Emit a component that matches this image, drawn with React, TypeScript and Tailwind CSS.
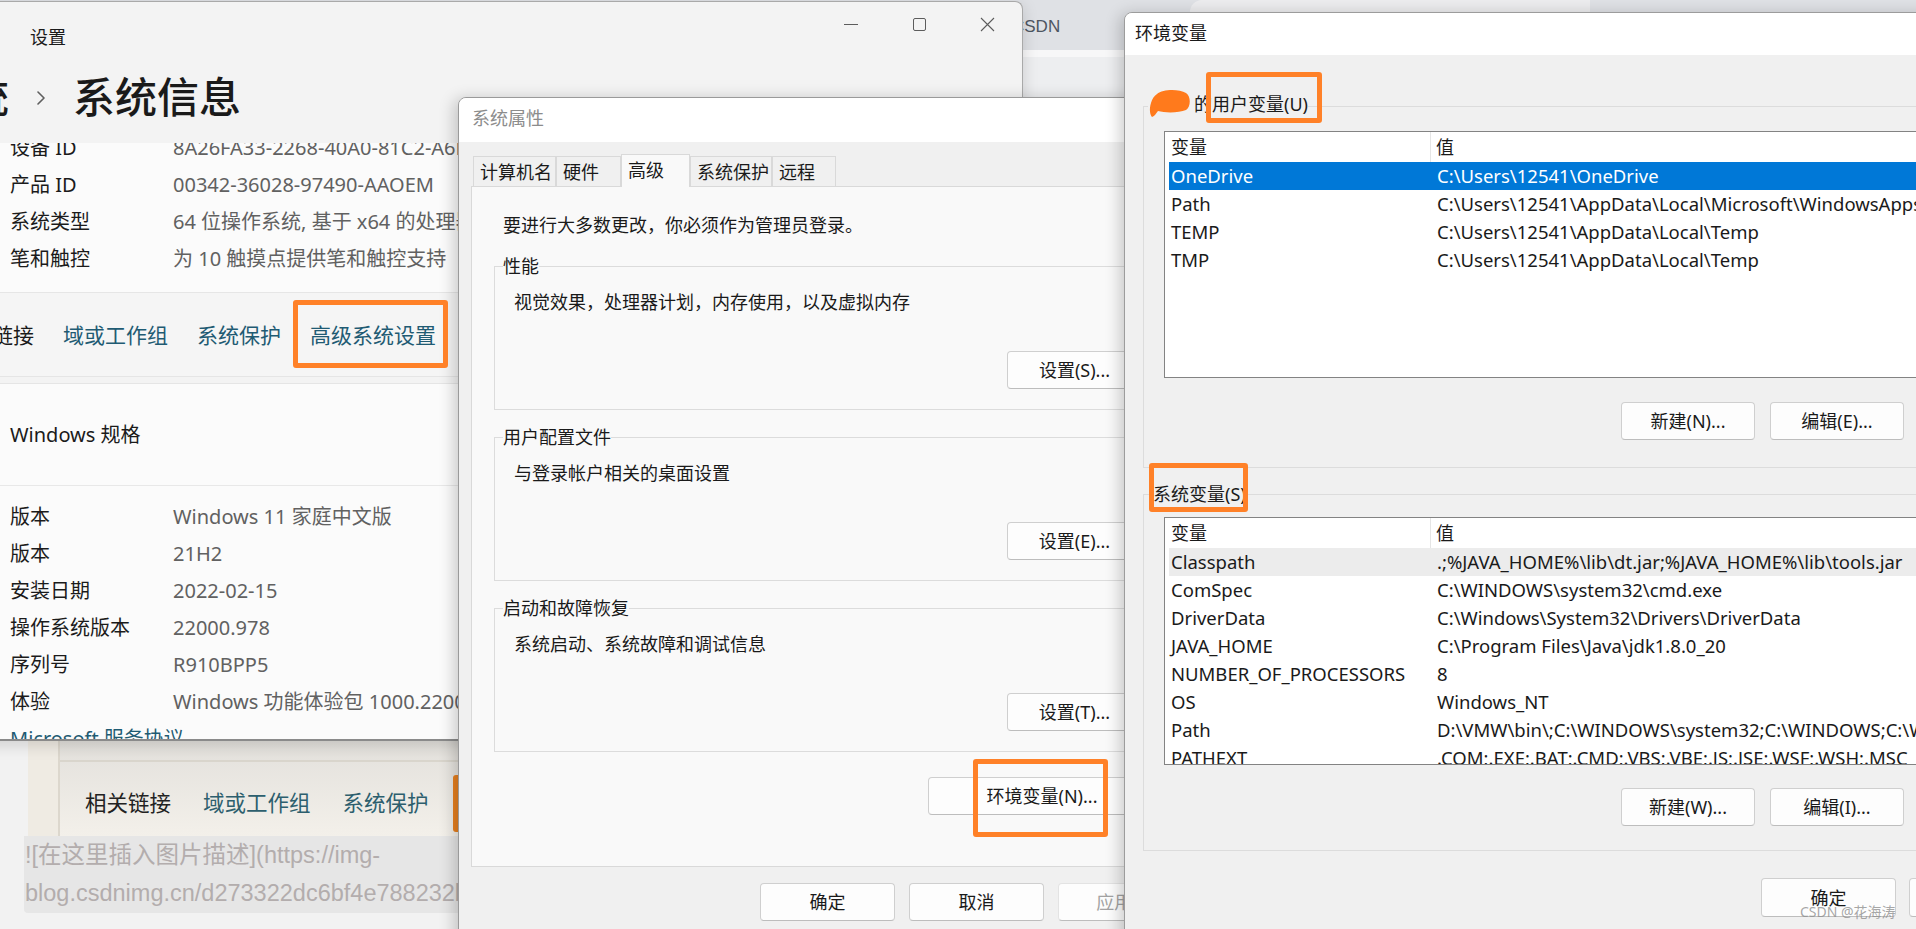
import React from "react";

const font = "font-['Noto_Sans','Noto_Sans_CJK_SC',sans-serif]";

const deviceRows = [
  ["设备 ID", "8A26FA33-2268-40A0-81C2-A6B8C3D2E1F0"],
  ["产品 ID", "00342-36028-97490-AAOEM"],
  ["系统类型", "64 位操作系统, 基于 x64 的处理器"],
  ["笔和触控", "为 10 触摸点提供笔和触控支持"],
];

const windowsRows = [
  ["版本", "Windows 11 家庭中文版"],
  ["版本", "21H2"],
  ["安装日期", "2022-02-15"],
  ["操作系统版本", "22000.978"],
  ["序列号", "R910BPP5"],
  ["体验", "Windows 功能体验包 1000.22000.978.0"],
];

const userVars = [
  ["OneDrive", "C:\\Users\\12541\\OneDrive"],
  ["Path", "C:\\Users\\12541\\AppData\\Local\\Microsoft\\WindowsApps;"],
  ["TEMP", "C:\\Users\\12541\\AppData\\Local\\Temp"],
  ["TMP", "C:\\Users\\12541\\AppData\\Local\\Temp"],
];

const sysVars = [
  ["Classpath", ".;%JAVA_HOME%\\lib\\dt.jar;%JAVA_HOME%\\lib\\tools.jar"],
  ["ComSpec", "C:\\WINDOWS\\system32\\cmd.exe"],
  ["DriverData", "C:\\Windows\\System32\\Drivers\\DriverData"],
  ["JAVA_HOME", "C:\\Program Files\\Java\\jdk1.8.0_20"],
  ["NUMBER_OF_PROCESSORS", "8"],
  ["OS", "Windows_NT"],
  ["Path", "D:\\VMW\\bin\\;C:\\WINDOWS\\system32;C:\\WINDOWS;C:\\WINDOWS\\System32\\Wbem"],
  ["PATHEXT", ".COM;.EXE;.BAT;.CMD;.VBS;.VBE;.JS;.JSE;.WSF;.WSH;.MSC"],
];

function BrowserBackdrop() {
  return (
    <div className="absolute inset-0 flex flex-col">
      <div className="flex h-[50px] items-start bg-[#dfe1e5]">
        <div className="ml-[1012px] mt-[15px] text-[17px] leading-[24px] text-[#4d5662] font-['Liberation_Sans',sans-serif]">
          CSDN
        </div>
        <div className="ml-[130px] h-[14px] w-[400px] rounded-tl-[12px] bg-[#ececee]" />
      </div>
      <div className="h-[7px] bg-[#f7f7f8]" />
      <div className="h-[40px] bg-[#edeef0]" />
      <div className="flex flex-1 flex-col bg-[#f2f2f2] pl-[24px] pt-[603px]">
        {/* pasted screenshot in the editor */}
        <div className="ml-[4px] flex h-[136px] w-[600px] bg-gradient-to-b from-[#dcdad6] to-[#f3f0ea]">
          <div className="w-[32px] border-r-2 border-[#dcd7cd] bg-[#efebe3]" />
          <div className="flex flex-1 flex-col">
            <div className="h-[62px] border-b-2 border-[#d9d5cc]" />
            <div className="flex flex-1 items-center gap-[32px] pl-[25px] pt-[8px] text-[21.5px] leading-[30px]">
              <span className="text-[#222]">相关链接</span>
              <span className="text-[#2d5f6e]">域或工作组</span>
              <span className="text-[#2d5f6e]">系统保护</span>
              <span className="ml-[-8px] h-[57px] w-[10px] rounded-[3px] bg-[#e8801f]" />
            </div>
          </div>
        </div>
        <div className="h-[77px] w-[600px] whitespace-nowrap rounded-b-[4px] bg-[#e6e6e6] pl-[1px] text-[23.5px] leading-[38px] text-[#b3adad] font-['Liberation_Sans','Noto_Sans_CJK_SC',sans-serif]">
          <div>![在这里插入图片描述](https://img-</div>
          <div>blog.csdnimg.cn/d273322dc6bf4e788232bd1ea4c6c</div>
        </div>
      </div>
    </div>
  );
}

function InfoRow({ label, value, link }: { label: string; value?: string; link?: boolean }) {
  return (
    <div className="flex h-[37px] items-center whitespace-nowrap text-[20px] leading-[28px]">
      {link ? (
        <span className="text-[#1f5b73]">{label}</span>
      ) : (
        <>
          <div className="w-[163px] shrink-0 text-[#1b1b1b]">{label}</div>
          <div className="text-[#616161]">{value}</div>
        </>
      )}
    </div>
  );
}

function SettingsWindow() {
  return (
    <div className="absolute left-[-120px] top-[1px] flex h-[740px] w-[1143px] flex-col overflow-hidden rounded-tr-[8px] border border-b-2 border-[#a9a9a9] border-b-[#8a8a8a] bg-[#f3f3f3] shadow-[0_4px_16px_rgba(0,0,0,0.15)]">
      <div className="flex h-[64px] shrink-0 items-start">
        <div className="pl-[149px] pt-[23px] text-[18px] leading-[24px] text-[#1a1a1a]">设置</div>
        <div className="ml-auto mr-[1px] flex h-[44px]">
          <div className="flex w-[68px] items-center justify-center">
            <div className="h-px w-[14px] bg-[#5c5c5c]" />
          </div>
          <div className="flex w-[68px] items-center justify-center">
            <div className="h-[13px] w-[13px] rounded-[2px] border border-[#5c5c5c]" />
          </div>
          <div className="flex w-[68px] items-center justify-center">
            <svg width="15" height="15" viewBox="0 0 15 15">
              <path d="M1 1 L14 14 M14 1 L1 14" stroke="#5c5c5c" strokeWidth="1.1" />
            </svg>
          </div>
        </div>
      </div>
      <div className="flex h-[77px] shrink-0 items-start pl-[44px] text-[42px] font-medium leading-[62px] text-[#1a1a1a]">
        <span>系统</span>
        <svg width="10" height="62" viewBox="0 0 10 62" className="ml-[26px] mr-[28px]">
          <path d="M3 26 L9 32 L3 38" fill="none" stroke="#5f5f5f" strokeWidth="1.6" strokeLinecap="round" strokeLinejoin="round" />
        </svg>
        <span>系统信息</span>
      </div>
      <div className="flex-1 overflow-hidden">
        <div className="-mt-[30px] flex flex-col px-[40px]">
          <div className="overflow-hidden rounded-[6px] border border-[#e5e5e5] bg-[#fbfbfb]">
            <div className="pb-[15px] pl-[88px] pt-[15px]">
              {deviceRows.map(([l, v]) => (
                <InfoRow key={l} label={l} value={v} />
              ))}
            </div>
            <div className="flex h-[84px] items-center gap-[29px] border-t border-[#e6e6e6] bg-[#f5f5f5] pl-[28px] text-[21px] leading-[28px] whitespace-nowrap">
              <span className="text-[#1a1a1a]">相关链接</span>
              <span className="text-[#1f5b73]">域或工作组</span>
              <span className="text-[#1f5b73]">系统保护</span>
              <span className="text-[#1f5b73]">高级系统设置</span>
            </div>
          </div>
          <div className="mt-[6px] rounded-[6px] border border-[#e5e5e5] bg-[#fbfbfb]">
            <div className="flex h-[102px] items-center border-b border-[#e8e8e8] pl-[88px] text-[20px] text-[#1b1b1b]">
              Windows 规格
            </div>
            <div className="pl-[88px] pt-[12px]">
              {windowsRows.map(([l, v], i) => (
                <InfoRow key={i} label={l} value={v} />
              ))}
              <InfoRow label="Microsoft 服务协议" link />
              <InfoRow label="Microsoft 软件许可条款" link />
            </div>
          </div>
        </div>
      </div>
    </div>
  );
}

function Btn({ children, className = "" }: { children: React.ReactNode; className?: string }) {
  return (
    <div
      className={`flex h-[38px] shrink-0 items-center justify-center whitespace-nowrap rounded-[4px] border border-[#cfcfcf] border-b-[#bdbdbd] bg-[#fdfdfd] text-[18px] leading-[24px] text-[#1a1a1a] ${className}`}
    >
      {children}
    </div>
  );
}

function Group({ legend, desc, button }: { legend: string; desc: string; button: string }) {
  return (
    <fieldset className="mx-[22px] border border-[#dcdcdc] pb-[20px]">
      <legend className="ml-[8px] text-[18px] leading-[24px] text-[#1a1a1a]">{legend}</legend>
      <div className="pl-[19px] pt-[12px] text-[18px] leading-[24px] text-[#1a1a1a]">{desc}</div>
      <div className="mt-[37px] flex justify-end pr-[24px]">
        <Btn className="w-[135px]">{button}</Btn>
      </div>
    </fieldset>
  );
}

function SystemPropsDialog() {
  const tabs = [
    ["计算机名", "w-[83px]"],
    ["硬件", "w-[65px]"],
    ["高级", "w-[69px]"],
    ["系统保护", "w-[82px]"],
    ["远程", "w-[64px]"],
  ];
  return (
    <div className="absolute left-[458px] top-[97px] h-[860px] w-[745px] overflow-hidden rounded-tl-[8px] border border-[#9a9a9a] bg-[#f0f0f0] shadow-[-4px_2px_16px_rgba(0,0,0,0.2)]">
      <div className="h-[44px] bg-white pl-[13px] text-[18px] leading-[40px] text-[#8c8c8c]">系统属性</div>
      <div className="ml-[14px] mt-[12px] flex h-[32px] items-end">
        {tabs.map(([t, w]) =>
          t === "高级" ? (
            <div
              key={t}
              className={`${w} relative z-10 -mb-px h-[33px] border border-b-0 border-[#d9d9d9] bg-[#f9f9f9] pl-[6px] pt-[3px] text-[18px] leading-[24px] text-[#1a1a1a]`}
            >
              {t}
            </div>
          ) : (
            <div
              key={t}
              className={`${w} h-[30px] border border-b-0 border-[#d9d9d9] bg-[#f0f0f0] pl-[6px] pt-[3px] text-[18px] leading-[24px] text-[#1a1a1a]`}
            >
              {t}
            </div>
          )
        )}
      </div>
      <div className="mx-[12px] h-[681px] border border-[#d9d9d9] bg-[#f9f9f9]">
        <div className="ml-[31px] mt-[26px] text-[18px] leading-[24px] text-[#1a1a1a]">
          要进行大多数更改，你必须作为管理员登录。
        </div>
        <div className="mt-[17px]">
          <Group legend="性能" desc="视觉效果，处理器计划，内存使用，以及虚拟内存" button="设置(S)..." />
        </div>
        <div className="mt-[15px]">
          <Group legend="用户配置文件" desc="与登录帐户相关的桌面设置" button="设置(E)..." />
        </div>
        <div className="mt-[15px]">
          <Group legend="启动和故障恢复" desc="系统启动、系统故障和调试信息" button="设置(T)..." />
        </div>
        <div className="ml-[456px] mt-[25px] flex">
          <Btn className="w-[228px]">环境变量(N)...</Btn>
        </div>
      </div>
      <div className="mt-[16px] flex justify-end gap-[14px] pr-[9px]">
        <Btn className="w-[135px]">确定</Btn>
        <Btn className="w-[135px]">取消</Btn>
        <Btn className="w-[135px] border-[#e3e3e3] bg-[#f6f6f6] text-[#a3a3a3]">应用(A)</Btn>
      </div>
    </div>
  );
}

function VarList({ rows, className, highlight }: { rows: string[][]; className: string; highlight: "select" | "hover" }) {
  return (
    <div className={`mx-[20px] overflow-hidden border border-[#838383] bg-white ${className}`}>
      <div className="flex h-[30px] items-center text-[18px] text-[#1a1a1a]">
        <div className="flex h-full w-[266px] items-center border-r border-[#e5e5e5] pl-[6px]">变量</div>
        <div className="pl-[5px]">值</div>
      </div>
      {rows.map(([n, v], i) => {
        const sel = i === 0 && highlight === "select";
        const hov = i === 0 && highlight === "hover";
        return (
          <div
            key={n + i}
            className={`ml-[4px] flex h-[28px] items-center whitespace-nowrap text-[18.5px] leading-[28px] ${
              sel ? "bg-[#0078d7] text-white" : hov ? "bg-[#ececec] text-[#1a1a1a]" : "text-[#1a1a1a]"
            }`}
          >
            <div className="w-[263px] shrink-0 pl-[2px]">{n}</div>
            <div className="pl-[5px]">{v}</div>
          </div>
        );
      })}
    </div>
  );
}

function EnvDialog() {
  return (
    <div className="absolute left-[1124px] top-[12px] h-[930px] w-[900px] overflow-hidden rounded-tl-[8px] border border-[#9c9c9c] bg-[#f0f0f0] shadow-[-4px_2px_16px_rgba(0,0,0,0.2)]">
      <div className="h-[42px] bg-white pl-[10px] text-[18px] leading-[40px] text-[#1a1a1a]">环境变量</div>
      <fieldset className="ml-[18px] mt-[37px] w-[870px] border border-[#dcdcdc] pb-[27px]">
        <legend className="ml-[4px] text-[18px] leading-[24px] text-[#1a1a1a]">
          <span className="inline-flex items-center">
            <svg width="42" height="24" viewBox="0 0 42 24" className="overflow-visible">
              <path
                d="M9 2 C15 -3 31 -3 38 1 C43 4 43 15 38 18 C31 21 17 21 10 19 C8 21 7 24 4 25 C2 23 1 17 3 11 C4 7 6 4 9 2 Z"
                fill="#ff7a1c"
              />
            </svg>
            <span className="ml-[4px]">的用户变量(U)</span>
          </span>
        </legend>
        <VarList rows={userVars} className="mt-[10px] h-[247px]" highlight="select" />
        <div className="mt-[24px] flex gap-[15px] pl-[477px]">
          <Btn className="w-[134px]">新建(N)...</Btn>
          <Btn className="w-[134px]">编辑(E)...</Btn>
          <Btn className="w-[134px]">删除(D)</Btn>
        </div>
      </fieldset>
      <fieldset className="ml-[18px] mt-[14px] w-[870px] border border-[#dcdcdc] pb-[24px]">
        <legend className="ml-[9px] text-[18px] leading-[24px] text-[#1a1a1a]">系统变量(S)</legend>
        <VarList rows={sysVars} className="mt-[11px] h-[248px]" highlight="hover" />
        <div className="mt-[23px] flex gap-[15px] pl-[477px]">
          <Btn className="w-[134px]">新建(W)...</Btn>
          <Btn className="w-[134px]">编辑(I)...</Btn>
          <Btn className="w-[134px]">删除(L)</Btn>
        </div>
      </fieldset>
      <div className="mt-[27px] flex gap-[13px] pl-[636px]">
        <Btn className="h-[39px] w-[135px] border-[1.5px] border-[#0067c0] border-b-[#0067c0]">确定</Btn>
        <Btn className="h-[39px] w-[135px]">取消</Btn>
      </div>
    </div>
  );
}

export default function App() {
  return (
    <div className={`relative h-[929px] w-[1916px] overflow-hidden bg-[#f2f2f2] ${font}`}>
      <BrowserBackdrop />
      <SettingsWindow />
      <SystemPropsDialog />
      <EnvDialog />
      {/* annotation boxes */}
      <div className="absolute left-[293px] top-[300px] h-[68px] w-[155px] rounded-[3px] border-[5px] border-[#ff8128]" />
      <div className="absolute left-[973px] top-[759px] h-[78px] w-[135px] rounded-[3px] border-[5px] border-[#ff8128]" />
      <div className="absolute left-[1206px] top-[72px] h-[51px] w-[116px] rounded-[3px] border-[5px] border-[#ff8128]" />
      <div className="absolute left-[1149px] top-[463px] h-[49px] w-[99px] rounded-[3px] border-[5px] border-[#ff8128]" />
      <div className="absolute left-[1800px] top-[902px] whitespace-nowrap text-[14px] leading-[20px] text-[#8f8f8f]/80">
        CSDN @花海涛
      </div>
    </div>
  );
}
